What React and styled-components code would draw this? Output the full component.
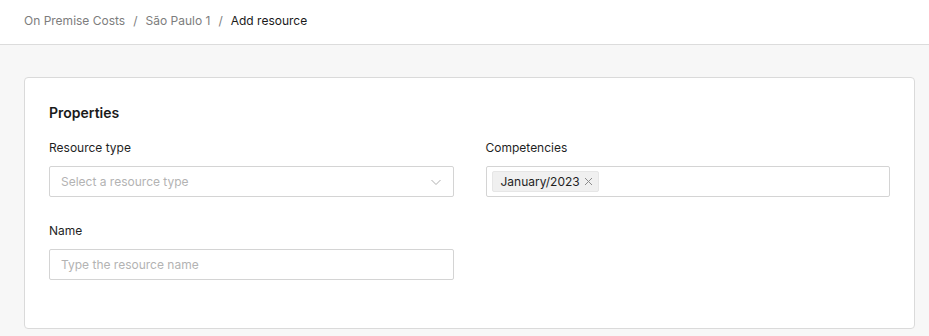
import React from 'react';
import styled, { createGlobalStyle } from 'styled-components';

const GlobalStyle = createGlobalStyle`
    html, body {
        margin: 0;
        padding: 0;
        background: #f7f7f7;
        font-family: Inter, "Liberation Sans", sans-serif;
        color: #1f1f1f;
    }
    * { box-sizing: border-box; }
`;

const Header = styled.header`
    height: 45px;
    background: #ffffff;
    border-bottom: 1px solid #dcdcdc;
    display: flex;
    align-items: center;
    padding: 0 24px 3px;
    font-size: 12px;
`;

const Crumb = styled.span`
    color: ${(p) => (p.$current ? '#1a1a1a' : '#7d7d7d')};
`;

const Sep = styled.span`
    color: #7d7d7d;
    margin: 0 8px;
`;

const Main = styled.main`
    padding: 32px 14px 0 24px;
`;

const Card = styled.section`
    background: #ffffff;
    border: 1px solid #dadada;
    border-radius: 4px;
    padding: 24px 24px 23px;
`;

const Title = styled.h2`
    margin: 0 0 15px;
    font-size: 14px;
    line-height: 22px;
    font-weight: 600;
    color: #1a1a1a;
`;

const Grid = styled.div`
    display: grid;
    grid-template-columns: 1fr 1fr;
    column-gap: 32px;
`;

const Field = styled.div`
    display: flex;
    flex-direction: column;
    margin-bottom: 25px;
`;

const Label = styled.label`
    font-size: 12px;
    line-height: 18px;
    margin-bottom: 9px;
    color: #1f1f1f;
`;

const Box = styled.div`
    height: 31px;
    border: 1px solid #d4d4d4;
    border-radius: 2px;
    background: #fff;
    display: flex;
    align-items: center;
    padding: ${(p) => (p.$tags ? '0 5px' : '0 11px')};
    font-size: 12px;
    color: #b3b3b3;
`;

const Placeholder = styled.span`
    flex: 1;
`;

const Tag = styled.span`
    display: inline-flex;
    align-items: center;
    gap: 4px;
    height: 21px;
    padding: 0 5px 0 8px;
    background: #f0f0f0;
    border: 1px solid #e6e6e6;
    border-radius: 2px;
    color: #1f1f1f;
    font-size: 12px;
`;

const Chevron = () => (
    <svg width="12" height="12" viewBox="0 0 12 12" fill="none">
        <path d="M1.5 4 L6 8.5 L10.5 4" stroke="#b0b0b0" strokeWidth="1" />
    </svg>
);

const Close = () => (
    <svg width="9" height="9" viewBox="0 0 9 9" fill="none">
        <path d="M1 1 L8 8 M8 1 L1 8" stroke="#8c8c8c" strokeWidth="1" />
    </svg>
);

export default function App() {
    return (
        <>
            <GlobalStyle />
            <Header>
                <Crumb>On Premise Costs</Crumb>
                <Sep>/</Sep>
                <Crumb>São Paulo 1</Crumb>
                <Sep>/</Sep>
                <Crumb $current>Add resource</Crumb>
            </Header>
            <Main>
                <Card>
                    <Title>Properties</Title>
                    <Grid>
                        <Field>
                            <Label>Resource type</Label>
                            <Box>
                                <Placeholder>Select a resource type</Placeholder>
                                <Chevron />
                            </Box>
                        </Field>
                        <Field>
                            <Label>Competencies</Label>
                            <Box $tags>
                                <Tag>
                                    January/2023
                                    <Close />
                                </Tag>
                            </Box>
                        </Field>
                        <Field>
                            <Label>Name</Label>
                            <Box>
                                <Placeholder>Type the resource name</Placeholder>
                            </Box>
                        </Field>
                    </Grid>
                </Card>
            </Main>
        </>
    );
}
